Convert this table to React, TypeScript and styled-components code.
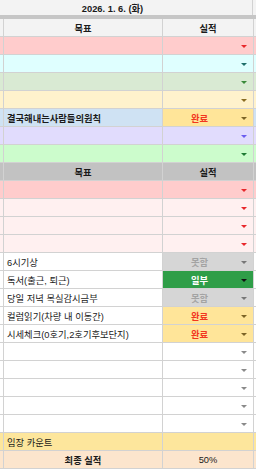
import React from "react";
import styled, { createGlobalStyle } from "styled-components";

const GRID = "#d2d2d2";

const Global = createGlobalStyle`
  html, body { margin: 0; padding: 0; background: #ffffff; }
  body { font-family: "Liberation Sans", Arial, "Noto Sans CJK KR", sans-serif; }
`;

const Sheet = styled.div`
  width: 256px;
  height: 474px;
  overflow: hidden;
  background: #ffffff;
  font-size: 9.3px;
  color: #1a1a1a;
`;

const TitleRow = styled.div`
  display: grid;
  grid-template-columns: 253px 3px;
  height: 15px;
  background: #f3f3f3;
  border-bottom: 4px solid #c6c6c6;
`;

const Title = styled.div`
  display: flex;
  align-items: center;
  justify-content: center;
  padding-right: 27px;
  border-right: 1px solid ${GRID};
  font-weight: 700;
  white-space: nowrap;
`;

const Row = styled.div<{ $bg: string }>`
  display: grid;
  grid-template-columns: 3px 159px 91px 3px;
  height: 18px;
  box-sizing: border-box;
  border-bottom: 1px solid ${GRID};
  background: ${(p) => p.$bg};
`;

const Edge = styled.div<{ $line?: boolean }>`
  border-left: ${(p) => (p.$line ? `1px solid ${GRID}` : "none")};
`;

const Cell = styled.div<{
  $bg?: string;
  $center?: boolean;
  $bold?: boolean;
  $color?: string;
}>`
  display: flex;
  align-items: center;
  justify-content: ${(p) => (p.$center ? "center" : "flex-start")};
  padding: 1px 3px 0;
  border-left: 1px solid ${GRID};
  background: ${(p) => p.$bg ?? "transparent"};
  color: ${(p) => p.$color ?? "#1a1a1a"};
  font-weight: ${(p) => (p.$bold ? 700 : 400)};
  white-space: nowrap;
  overflow: hidden;
`;

const Dropdown = styled.div<{ $bg?: string }>`
  display: flex;
  align-items: center;
  border-left: 1px solid ${GRID};
  background: ${(p) => p.$bg ?? "transparent"};
`;

const Value = styled.span<{ $color: string }>`
  flex: 1;
  text-align: center;
  padding-top: 1px;
  color: ${(p) => p.$color};
  font-weight: 700;
  white-space: nowrap;
`;

const Arrow = styled.span<{ $color: string }>`
  width: 0;
  height: 0;
  margin: 1px 6px 0 5px;
  border-left: 3px solid transparent;
  border-right: 3px solid transparent;
  border-top: 3px solid ${(p) => p.$color};
`;

type RowData = {
  bg: string;
  label?: string;
  labelBold?: boolean;
  labelCenter?: boolean;
  header?: boolean;
  chipBg?: string;
  value?: string;
  valueColor?: string;
  arrow?: string;
  plain?: string;
};

const PINK = "#ffcccc";
const LPINK = "#fff0f0";
const GOLD = "#ffe599";

const rows: RowData[] = [
  { bg: "#f3f3f3", header: true },
  { bg: PINK, arrow: "#e8272b" },
  { bg: "#dfffff", arrow: "#1f6f6a" },
  { bg: "#d9ead3", arrow: "#3a8a3a" },
  { bg: "#fff2cc", arrow: "#8a6c22" },
  {
    bg: "#cfe2f3",
    label: "결국해내는사람들의원칙",
    labelBold: true,
    chipBg: GOLD,
    value: "완료",
    valueColor: "#f2361e",
    arrow: "#7c6426",
  },
  { bg: "#e1dcfd", arrow: "#6a5cf0" },
  { bg: "#ccfccc", arrow: "#1f7a33" },
  { bg: "#c2c2c2", header: true },
  { bg: PINK, arrow: "#e8272b" },
  { bg: LPINK, arrow: "#e8272b" },
  { bg: LPINK, arrow: "#e8272b" },
  { bg: LPINK, arrow: "#e8272b" },
  {
    bg: "#ffffff",
    label: "6시기상",
    chipBg: "#d6d6d6",
    value: "못함",
    valueColor: "#a3a3a3",
    arrow: "#777777",
  },
  {
    bg: "#ffffff",
    label: "독서(출근, 퇴근)",
    chipBg: "#2f9e48",
    value: "일부",
    valueColor: "#ffffff",
    arrow: "#111111",
  },
  {
    bg: "#ffffff",
    label: "당일 저녁 목실감시금부",
    chipBg: "#d6d6d6",
    value: "못함",
    valueColor: "#a3a3a3",
    arrow: "#777777",
  },
  {
    bg: "#ffffff",
    label: "컬럼읽기(차량 내 이동간)",
    chipBg: GOLD,
    value: "완료",
    valueColor: "#f2361e",
    arrow: "#7c6426",
  },
  {
    bg: "#ffffff",
    label: "시세체크(0호기,2호기후보단지)",
    chipBg: GOLD,
    value: "완료",
    valueColor: "#f2361e",
    arrow: "#7c6426",
  },
  { bg: "#ffffff", arrow: "#8a8a8a" },
  { bg: "#ffffff", arrow: "#8a8a8a" },
  { bg: "#ffffff", arrow: "#8a8a8a" },
  { bg: "#ffffff", arrow: "#8a8a8a" },
  { bg: "#ffffff", arrow: "#8a8a8a" },
  { bg: "#fde69c", label: "임장 카운트", plain: "" },
  { bg: "#fce5cd", label: "최종 실적", labelBold: true, labelCenter: true, plain: "50%" },
];

function SheetRow({ r }: { r: RowData }) {
  if (r.header) {
    return (
      <Row $bg={r.bg}>
        <Edge />
        <Cell $center $bold>목표</Cell>
        <Cell $center $bold>실적</Cell>
        <Edge $line />
      </Row>
    );
  }
  return (
    <Row $bg={r.bg}>
      <Edge />
      <Cell $bold={r.labelBold} $center={r.labelCenter}>
        {r.label ?? ""}
      </Cell>
      {r.plain !== undefined ? (
        <Cell $center>{r.plain}</Cell>
      ) : (
        <Dropdown $bg={r.chipBg}>
          <Value $color={r.valueColor ?? "#000"}>{r.value ?? ""}</Value>
          <Arrow $color={r.arrow ?? "#888"} />
        </Dropdown>
      )}
      <Edge $line />
    </Row>
  );
}

export default function App() {
  return (
    <>
      <Global />
      <Sheet>
        <TitleRow>
          <Title>2026. 1. 6. (화)</Title>
          <Edge />
        </TitleRow>
        {rows.map((r, i) => (
          <SheetRow key={i} r={r} />
        ))}
      </Sheet>
    </>
  );
}
